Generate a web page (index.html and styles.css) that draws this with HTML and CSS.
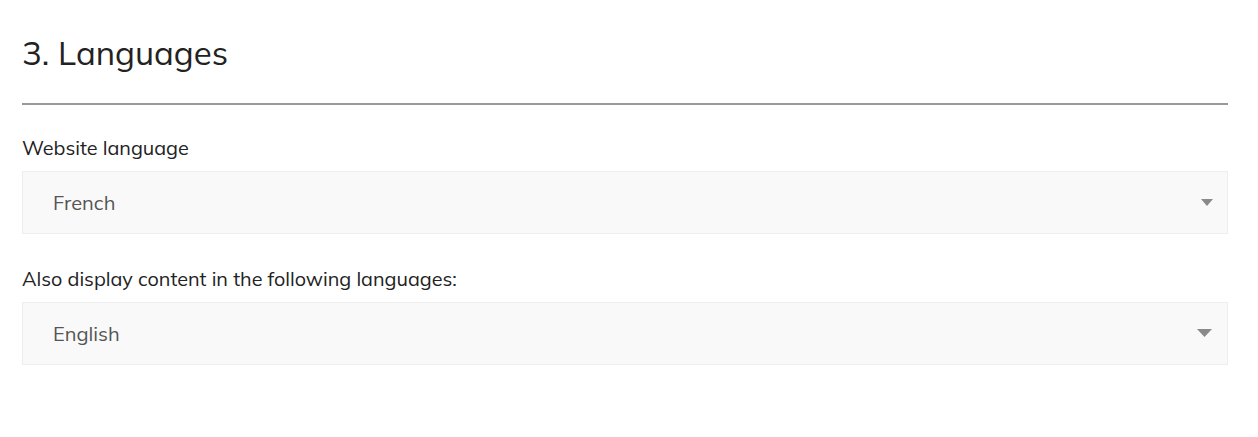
FILE: index.html
```
<!DOCTYPE html>
<html lang="en">
<head>
    <meta charset="UTF-8">
    <meta name="viewport" content="width=device-width, initial-scale=1.0">
    <title>Languages</title>
    <link rel="stylesheet" href="styles.css">
</head>
<body>
    <div class="section">
        <h2 class="section-title">3. Languages</h2>
        <div class="form-group">
            <label for="siteLang">Website language</label>
            <div class="select-wrap">
                <select id="siteLang" class="select">
                    <option>French</option>
                    <option>English</option>
                </select>
                <svg class="arrow" width="12" height="7" viewBox="0 0 12 7"><path d="M0 0H12L6 7Z" fill="#8a8a8a"/></svg>
            </div>
        </div>
        <div class="form-group">
            <label for="extraLang">Also display content in the following languages:</label>
            <div class="select-wrap">
                <select id="extraLang" class="select">
                    <option>English</option>
                    <option>French</option>
                </select>
                <svg class="arrow arrow-lg" width="15" height="8" viewBox="0 0 15 8"><path d="M0 0H15L7.5 8Z" fill="#8a8a8a"/></svg>
            </div>
        </div>
    </div>
</body>
</html>
```
FILE: styles.css
```
body {
    margin: 0;
    padding: 0;
    background: #ffffff;
    color: #222222;
    font-family: "Mulish", "Muli", Lato, "Noto Sans", sans-serif;
}

.section {
    padding: 22px 30px 0 22px;
}

.section-title {
    font-size: 33px;
    font-weight: 400;
    line-height: 40px;
    margin: 11px 0 0;
    padding-bottom: 30px;
    border-bottom: 2px solid #999999;
    color: #222222;
}

.form-group {
    margin-top: 32px;
}

.form-group + .form-group {
    margin-top: 34px;
}

label {
    display: block;
    font-size: 19.8px;
    line-height: 22px;
    margin-bottom: 12px;
    color: #222222;
}

.select-wrap {
    position: relative;
}

.select {
    display: block;
    width: 100%;
    height: 63px;
    box-sizing: border-box;
    padding: 0 30px;
    border: 1px solid #eeeeee;
    border-radius: 0;
    background: #f9f9f9;
    color: #555555;
    font-family: inherit;
    font-size: 20px;
    appearance: none;
    -webkit-appearance: none;
    outline: none;
}

.arrow {
    position: absolute;
    right: 15px;
    top: 28px;
    pointer-events: none;
}

.arrow-lg {
    right: 16px;
    top: 27px;
}
```
